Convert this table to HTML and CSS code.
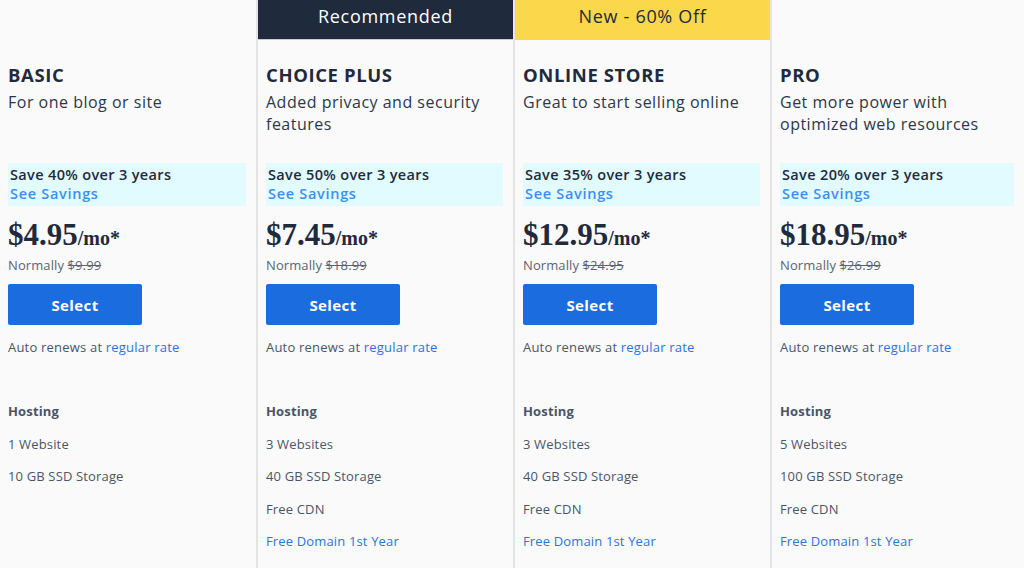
FILE: index.html
```html
<!DOCTYPE html>
<html>
<head>
<meta charset="utf-8">
<link rel="stylesheet" href="styles.css">
</head>
<body>
<div class="plans">
  <div class="col">
    <div class="banner"></div>
    <div class="body">
      <h2 class="title">BASIC</h2>
      <p class="sub">For one blog or site</p>
      <div class="save"><div class="save-t">Save 40% over 3 years</div><div class="save-l">See Savings</div></div>
      <div class="price">$4.95<span class="mo">/mo*</span></div>
      <div class="normal">Normally <s>$9.99</s></div>
      <button class="btn">Select</button>
      <div class="auto">Auto renews at <span class="link">regular rate</span></div>
      <ul class="feat">
        <li class="head">Hosting</li>
        <li>1 Website</li>
        <li>10 GB SSD Storage</li>
      </ul>
    </div>
  </div>
  <div class="col">
    <div class="banner dark">Recommended</div>
    <div class="body">
      <h2 class="title">CHOICE PLUS</h2>
      <p class="sub">Added privacy and security features</p>
      <div class="save"><div class="save-t">Save 50% over 3 years</div><div class="save-l">See Savings</div></div>
      <div class="price">$7.45<span class="mo">/mo*</span></div>
      <div class="normal">Normally <s>$18.99</s></div>
      <button class="btn">Select</button>
      <div class="auto">Auto renews at <span class="link">regular rate</span></div>
      <ul class="feat">
        <li class="head">Hosting</li>
        <li>3 Websites</li>
        <li>40 GB SSD Storage</li>
        <li>Free CDN</li>
        <li class="link">Free Domain 1st Year</li>
      </ul>
    </div>
  </div>
  <div class="col">
    <div class="banner yellow">New - 60% Off</div>
    <div class="body">
      <h2 class="title">ONLINE STORE</h2>
      <p class="sub">Great to start selling online</p>
      <div class="save"><div class="save-t">Save 35% over 3 years</div><div class="save-l">See Savings</div></div>
      <div class="price">$12.95<span class="mo">/mo*</span></div>
      <div class="normal">Normally <s>$24.95</s></div>
      <button class="btn">Select</button>
      <div class="auto">Auto renews at <span class="link">regular rate</span></div>
      <ul class="feat">
        <li class="head">Hosting</li>
        <li>3 Websites</li>
        <li>40 GB SSD Storage</li>
        <li>Free CDN</li>
        <li class="link">Free Domain 1st Year</li>
      </ul>
    </div>
  </div>
  <div class="col">
    <div class="banner"></div>
    <div class="body">
      <h2 class="title">PRO</h2>
      <p class="sub">Get more power with optimized web resources</p>
      <div class="save"><div class="save-t">Save 20% over 3 years</div><div class="save-l">See Savings</div></div>
      <div class="price">$18.95<span class="mo">/mo*</span></div>
      <div class="normal">Normally <s>$26.99</s></div>
      <button class="btn">Select</button>
      <div class="auto">Auto renews at <span class="link">regular rate</span></div>
      <ul class="feat">
        <li class="head">Hosting</li>
        <li>5 Websites</li>
        <li>100 GB SSD Storage</li>
        <li>Free CDN</li>
        <li class="link">Free Domain 1st Year</li>
      </ul>
    </div>
  </div>
</div>
</body>
</html>
```

FILE: styles.css
```css
* { box-sizing: border-box; }
html, body {
  margin: 0;
  padding: 0;
  background: #fafafb;
  font-family: "Open Sans", "DejaVu Sans", sans-serif;
  color: #2d3748;
}
.plans {
  display: grid;
  grid-template-columns: 256px 257px 257px 1fr;
  height: 568px;
  overflow: hidden;
}
.col { display: flex; flex-direction: column; }
.col + .col { border-left: 2px solid #e4e4e6; }
.banner {
  height: 40px;
  padding-top: 5px;
  text-align: center;
  font-size: 18px;
  line-height: 22px;
  letter-spacing: 0.7px;
}
.banner.dark { background: #1f2a3c; color: #ffffff; border-bottom: 1px solid #c8ccd2; }
.banner.yellow { background: #fbd84b; color: #1f2a3c; }
.body { padding: 0 10px 0 8px; }
.title {
  margin: 24px 0 0;
  font-size: 18.5px;
  line-height: 22px;
  font-weight: 700;
  color: #1f2a3c;
  letter-spacing: 0.6px;
}
.sub {
  margin: 5px 0 0;
  font-size: 16px;
  line-height: 22px;
  min-height: 44px;
  color: #2d3748;
  letter-spacing: 0.5px;
}
.save {
  margin-top: 28px;
  background: #e2fbfe;
  padding: 2px 2px 3px;
  height: 43px;
}
.save-t, .save-l {
  font-size: 14.5px;
  line-height: 19px;
  font-weight: 600;
  letter-spacing: 0.35px;
}
.save-t { color: #1f2a3c; }
.save-l { color: #3d8ef3; letter-spacing: 0.7px; }
.price {
  margin-top: 13px;
  font-family: "Liberation Serif", "Times New Roman", serif;
  font-weight: 700;
  font-size: 31px;
  line-height: 31px;
  height: 33px;
  color: #1f2a3c;
}
.mo { font-size: 20px; line-height: 20px; }
.normal {
  margin-top: 4px;
  font-size: 13px;
  line-height: 18px;
  color: #5a6473;
  letter-spacing: 0.1px;
}
.normal s { color: #5a6473; }
.btn {
  display: block;
  margin-top: 10px;
  width: 134px;
  height: 41px;
  border: none;
  border-radius: 2px;
  background: #1b6cdf;
  color: #ffffff;
  font-family: inherit;
  font-size: 15px;
  font-weight: 700;
  letter-spacing: 0.4px;
}
.auto {
  margin-top: 13px;
  font-size: 13px;
  line-height: 18px;
  color: #4a5568;
  letter-spacing: 0.2px;
}
.link { color: #2a74e0; }
.feat {
  list-style: none;
  margin: 39px 0 0;
  padding: 0;
}
.feat li {
  font-size: 13px;
  line-height: 32.6px;
  color: #4a5568;
  letter-spacing: 0.15px;
}
.feat li.head { font-weight: 700; color: #4a5568; }
.feat li.link { color: #2a74e0; }
```
